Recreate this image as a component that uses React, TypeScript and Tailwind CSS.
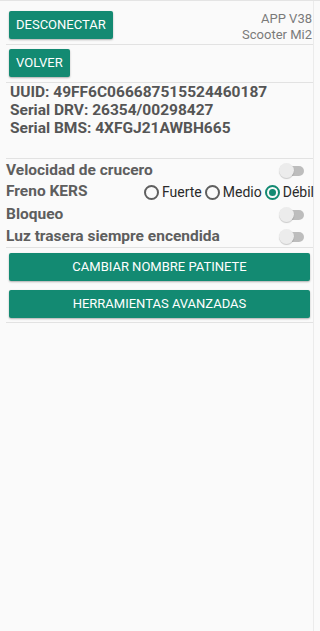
export default function App() {
  const font = { fontFamily: "Roboto, 'Liberation Sans', sans-serif" }

  function Toggle() {
    return (
      <div className="relative w-[25px] h-[15px] flex items-center">
        <div className="absolute left-[3px] right-0 h-[10px] rounded-full bg-[#bdbdbd]" />
        <div className="absolute left-0 w-[15px] h-[15px] rounded-full bg-[#ececec] shadow-[0_1px_1px_rgba(0,0,0,0.2)]" />
      </div>
    )
  }

  function Radio({ label, checked }: { label: string; checked?: boolean }) {
    return (
      <div className="flex items-center gap-[3px]">
        <div
          className={
            checked
              ? "w-[15px] h-[15px] rounded-full border-2 border-[#138a72] flex items-center justify-center"
              : "w-[15px] h-[15px] rounded-full border-2 border-[#5f5f5f]"
          }
        >
          {checked && <div className="w-[7px] h-[7px] rounded-full bg-[#138a72]" />}
        </div>
        <span className="text-[14px] text-[#2a2a2a]">{label}</span>
      </div>
    )
  }

  const btn =
    "bg-[#138a72] rounded-[2px] text-white text-[13px] font-normal shadow-[0_1px_2px_rgba(0,0,0,0.3)]"

  return (
    <div style={font} className="w-[320px] h-[631px] bg-[#fafafa] border-t border-[#e4e4e4]">
      <div className="w-[314px] h-full border-r border-[#ebebeb] pl-[6px]">
        <div className="h-[43px] flex justify-between items-start pt-[10px]">
          <button className={"ml-[3px] h-[28px] px-[7px] " + btn}>DESCONECTAR</button>
          <div className="text-right text-[13px] leading-[16px] text-[#7a7a7a] pr-[1px]">
            <div>APP V38</div>
            <div>Scooter Mi2</div>
          </div>
        </div>
        <div className="h-px bg-[#e2e2e2]" />
        <div className="h-[37px] pt-[4px]">
          <button className={"ml-[3px] h-[28px] px-[7px] " + btn}>VOLVER</button>
        </div>
        <div className="h-px bg-[#e2e2e2]" />
        <div className="h-[75px] pl-[4px] text-[15.5px] leading-[18px] font-bold text-[#555]">
          <div>UUID: 49FF6C066687515524460187</div>
          <div>Serial DRV: 26354/00298427</div>
          <div>Serial BMS: 4XFGJ21AWBH665</div>
        </div>
        <div className="h-px bg-[#e2e2e2]" />
        <div className="h-[88px] text-[15.5px] font-bold text-[#5e5e5e]">
          <div className="flex items-center justify-between h-[23px] pr-[9px]">
            <span>Velocidad de crucero</span>
            <Toggle />
          </div>
          <div className="flex items-center justify-between h-[21px] pr-0">
            <span className="self-start leading-[18px]">Freno KERS</span>
            <div className="flex items-center gap-[3px] font-normal mr-[-1px]">
              <Radio label="Fuerte" />
              <Radio label="Medio" />
              <Radio label="Débil" checked />
            </div>
          </div>
          <div className="flex items-center justify-between h-[23px] pr-[9px]">
            <span>Bloqueo</span>
            <Toggle />
          </div>
          <div className="flex items-center justify-between h-[21px] pr-[9px]">
            <span>Luz trasera siempre encendida</span>
            <Toggle />
          </div>
        </div>
        <div className="h-px bg-[#e2e2e2]" />
        <div className="px-[3px] pt-[5px] pb-[4px] flex flex-col gap-[9px]">
          <button className={"h-[28px] w-full " + btn}>CAMBIAR NOMBRE PATINETE</button>
          <button className={"h-[28px] w-full " + btn}>HERRAMIENTAS AVANZADAS</button>
        </div>
        <div className="h-px bg-[#e2e2e2]" />
      </div>
    </div>
  )
}
